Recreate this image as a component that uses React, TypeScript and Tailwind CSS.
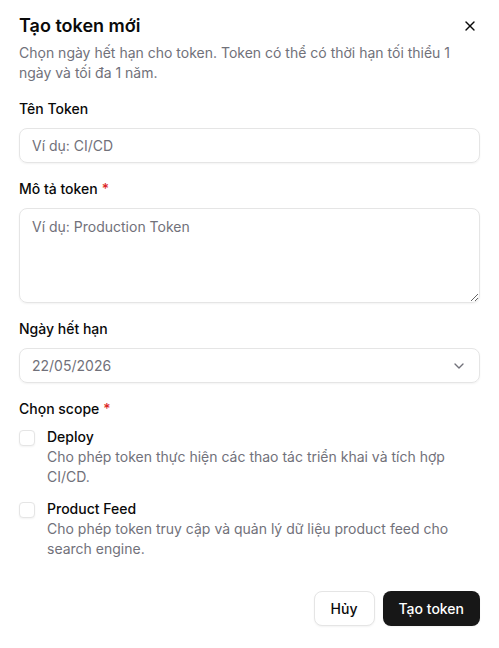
import * as React from "react"
import { X, ChevronDown } from "lucide-react"

function Label({ children, required }: { children: React.ReactNode; required?: boolean }) {
  return (
    <div className="text-sm leading-5 font-medium text-[#0a0a0a]">
      {children}
      {required && <span className="text-[#dc2626] ml-1">*</span>}
    </div>
  )
}

function ScopeItem({ title, desc }: { title: string; desc: string }) {
  return (
    <label className="flex gap-3">
      <span className="mt-[3px] w-4 h-4 shrink-0 rounded-[4px] border border-[#e5e5e5] shadow-xs bg-white" />
      <span className="flex flex-col">
        <span className="text-sm leading-5 font-medium text-[#0a0a0a]">{title}</span>
        <span className="text-sm leading-5 text-[#71717a] pr-6">{desc}</span>
      </span>
    </label>
  )
}

export default function App() {
  const [name, setName] = React.useState("")
  const [desc, setDesc] = React.useState("")

  return (
    <div className="w-[499px] min-h-[648px] bg-white px-[19px] pt-[12px] font-['Inter',sans-serif]">
      {/* header */}
      <div className="flex items-center justify-between">
        <h2 className="text-lg leading-7 font-semibold text-[#0a0a0a]">Tạo token mới</h2>
        <X className="w-4 h-4 text-[#0a0a0a] mr-[2px]" strokeWidth={2} />
      </div>
      <p className="mt-[3px] text-sm leading-5 text-[#71717a] pr-6">
        Chọn ngày hết hạn cho token. Token có thể có thời hạn tối thiểu 1 ngày và tối đa 1 năm.
      </p>

      <div className="mt-4 flex flex-col gap-[9px]">
        <Label>Tên Token</Label>
        <input
          className="h-[35px] w-full rounded-lg border border-[#e5e5e5] px-3 text-sm text-[#0a0a0a] shadow-xs outline-none placeholder:text-[#71717a]"
          placeholder="Ví dụ: CI/CD"
          value={name}
          onChange={(e) => setName(e.target.value)}
        />
      </div>

      <div className="mt-4 flex flex-col gap-[9px]">
        <Label required>Mô tả token</Label>
        <textarea
          className="h-[95px] w-full rounded-lg border border-[#e5e5e5] px-3 py-2 text-sm leading-5 text-[#0a0a0a] shadow-xs outline-none placeholder:text-[#71717a] block"
          placeholder="Ví dụ: Production Token"
          value={desc}
          onChange={(e) => setDesc(e.target.value)}
        />
      </div>

      <div className="mt-4 flex flex-col gap-[9px]">
        <Label>Ngày hết hạn</Label>
        <div className="h-[35px] w-full rounded-lg border border-[#e5e5e5] pl-3 pr-3 flex items-center justify-between shadow-xs">
          <span className="text-sm text-[#71717a]">22/05/2026</span>
          <ChevronDown className="w-4 h-4 text-[#71717a]" />
        </div>
      </div>

      <div className="mt-4 flex flex-col gap-2">
        <Label required>Chọn scope</Label>
        <div className="flex flex-col gap-3">
          <ScopeItem
            title="Deploy"
            desc="Cho phép token thực hiện các thao tác triển khai và tích hợp CI/CD."
          />
          <ScopeItem
            title="Product Feed"
            desc="Cho phép token truy cập và quản lý dữ liệu product feed cho search engine."
          />
        </div>
      </div>

      <div className="mt-8 flex justify-end gap-2">
        <button className="h-[35px] px-4 rounded-lg border border-[#e5e5e5] bg-white text-sm font-medium text-[#0a0a0a] shadow-xs">
          Hủy
        </button>
        <button className="h-[35px] px-4 rounded-lg bg-[#171717] text-sm font-medium text-white shadow-xs">
          Tạo token
        </button>
      </div>
    </div>
  )
}
